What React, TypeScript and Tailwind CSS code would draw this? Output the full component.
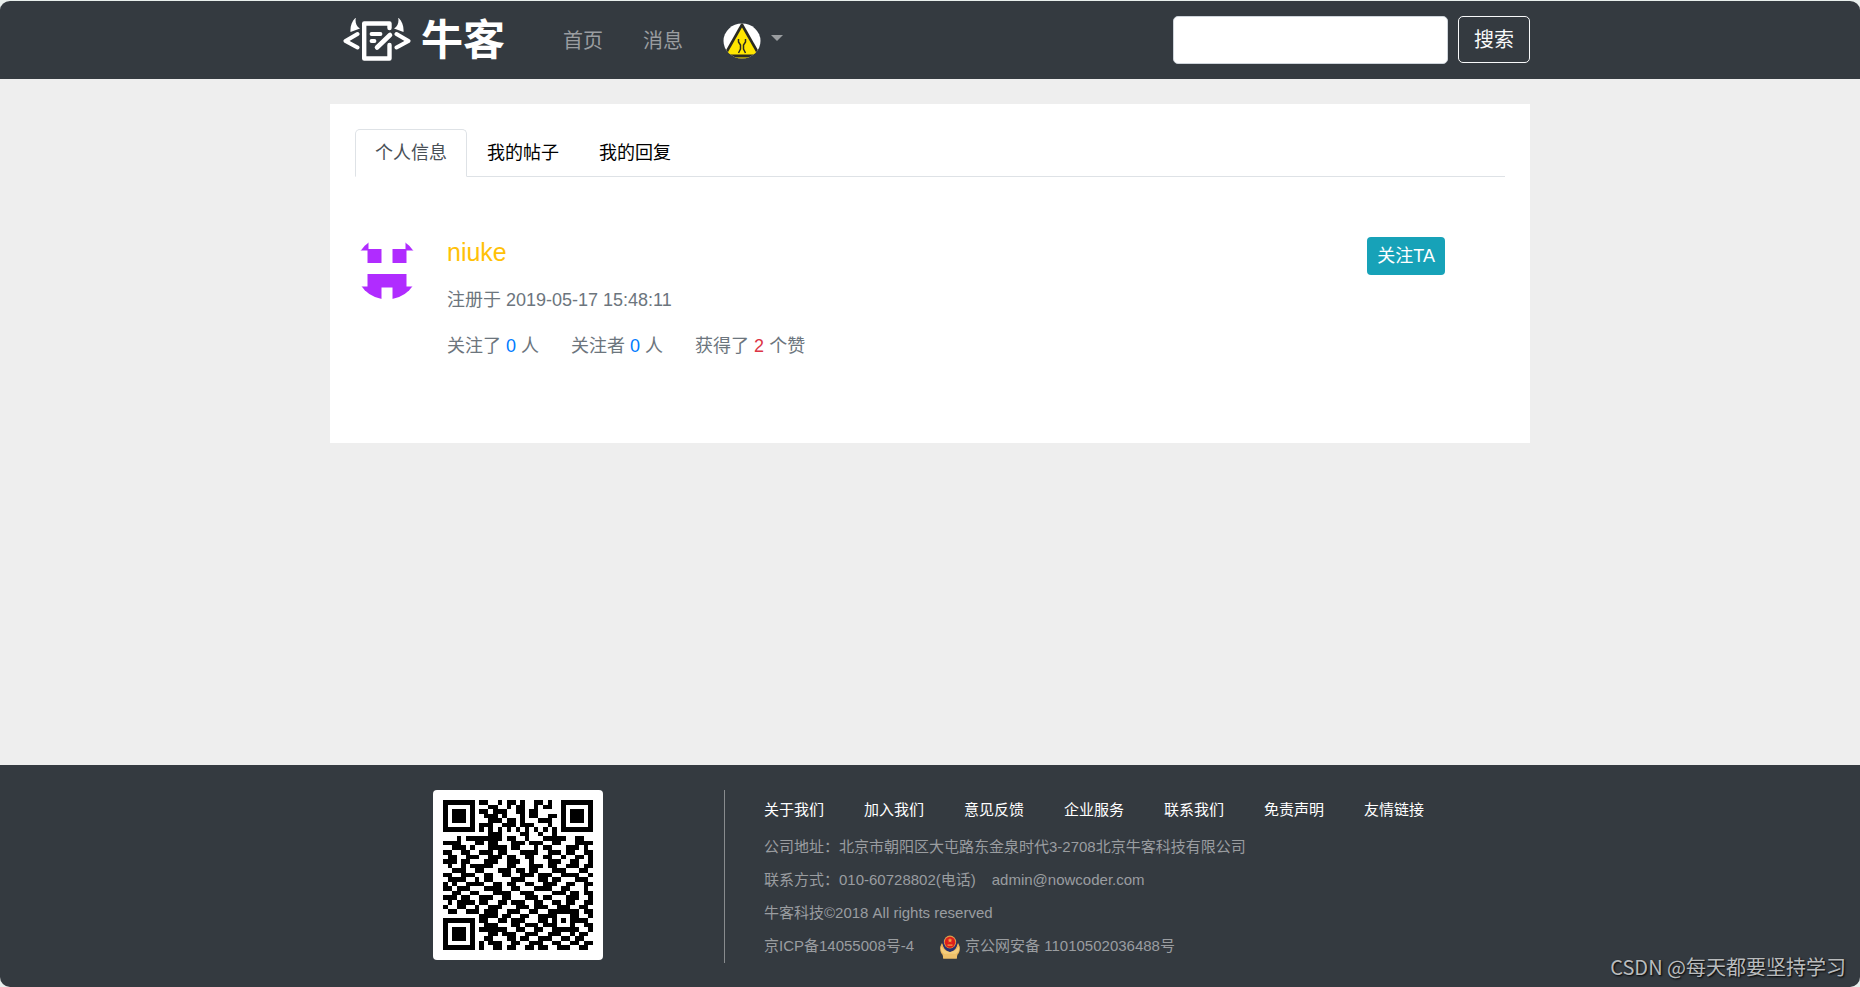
import React from "react";

const QR_ROWS = [
  "111111101100101101001101001111111",
  "100000100011001011001011001000001",
  "101110101101110011011000001011101",
  "101110100111010001011001101011101",
  "101110100011101101000111001011101",
  "100000101110011101110001001000001",
  "111111101010101010101010101111111",
  "000000000011100001100100100000000",
  "000101111111101100100011111001100",
  "111100011011000111011100110001111",
  "001110100011110110001011000111010",
  "110011001110110001111001110110011",
  "011001110011101100110011001001101",
  "111011000111001110010001110011001",
  "010010111110001100011101100111011",
  "001110011000111011011000111000110",
  "110011100110011001110111001111001",
  "011110010110000111000110110001110",
  "101001111001101100110011100110011",
  "110111000111100110001111001100010",
  "001100110001111001110000111011011",
  "111011001110011000111011000111001",
  "010111101100110111001100110110011",
  "100110010011100011101110011100110",
  "011001110111001110011001111111011",
  "000000001111011001100111100011001",
  "111111101100110111000110101011110",
  "100000100111000110111011100010011",
  "101110101111110011001100111111001",
  "101110100011011100111001110010110",
  "101110100110001101100111001101100",
  "100000101011100110011100110011011",
  "111111101001101100110110011100110",
];

const FOOTER_LINKS = ["关于我们", "加入我们", "意见反馈", "企业服务", "联系我们", "免责声明", "友情链接"];
const TABS = ["个人信息", "我的帖子", "我的回复"];

function LogoMark() {
  return (
    <svg className="h-11 w-[68px]" viewBox="0 0 68 44" fill="none" stroke="#fff" strokeLinecap="round" strokeLinejoin="round" aria-hidden="true">
      <path d="M14.500 16 2.500 23 14.500 29.500" strokeWidth="4" />
      <path d="M53.500 16 65.500 23 53.500 29.500" strokeWidth="4" />
      <path d="M46.500 10V5.500H21.200V40.500H46.500V27" strokeWidth="4.400" />
      <path d="M28.500 16H37.500M28.500 23H31.500" strokeWidth="3.800" />
      <path d="M34 29.500 47 17" strokeWidth="4.600" />
      <path d="M12.800-.5C9 3 7 8 7.500 14L17 10.500C13 8.500 12 4 12.800-.5Z" fill="#fff" stroke="none" />
      <path d="M55.200-.5C59 3 61 8 60.500 14L51 10.500C55 8.500 56 4 55.200-.5Z" fill="#fff" stroke="none" />
    </svg>
  );
}

function RoadSignAvatar() {
  return (
    <svg className="h-9 w-[38px]" viewBox="0 0 38 36" role="img" aria-label="头像">
      <clipPath id="sign-clip">
        <ellipse cx="19" cy="18" rx="18.500" ry="17.500" />
      </clipPath>
      <g clipPath="url(#sign-clip)">
        <rect width="38" height="36" fill="#fff" />
        <path d="M19-1 40 36H-2Z" fill="#2b2b22" />
        <path d="M19 4.500 33.500 30Q33.500 31.500 32 31.500H6Q4.500 31.500 4.500 30Z" fill="#ffe600" />
        <path d="M0 34.300H38V36H0Z" fill="#c8b400" />
        <path d="M15.500 16V19L17.500 22V26L15.500 30M22.500 16V19L20.500 22V26L22.500 30" stroke="#2b2b22" strokeWidth="1.500" fill="none" />
      </g>
    </svg>
  );
}

function ProfileAvatar() {
  return (
    <svg className="size-16 shrink-0" viewBox="0 0 64 64" role="img" aria-label="niuke">
      <clipPath id="profile-clip">
        <circle cx="32" cy="32" r="31.500" />
      </clipPath>
      <g clipPath="url(#profile-clip)" fill="#b02cff">
        <path d="M0 0H13.500V14.500H0ZM50.500 0H64V14.500H50.500Z" />
        <path d="M12.500 13H26.500V27H12.500ZM37.500 13H51.500V27H37.500Z" />
        <path d="M12.500 38H51.500V50.500H64V64H37.500V51.500H26.500V64H0V50.500H12.500Z" />
      </g>
    </svg>
  );
}

function QrCode() {
  return (
    <svg className="size-[150px]" viewBox="0 0 33 33" shapeRendering="crispEdges" role="img" aria-label="二维码">
      {QR_ROWS.map((row, y) =>
        row.split("").map((bit, x) => (bit === "1" ? <rect key={`${x}-${y}`} x={x} y={y} width="1" height="1" fill="#000" /> : null)),
      )}
    </svg>
  );
}

function PoliceEmblem() {
  return (
    <svg className="h-6 w-5" viewBox="0 0 20 24" aria-hidden="true">
      <path d="M2 8C-1 13 0 18 3 20V23.500H17V20C20 18 21 13 18 8L15 14H5Z" fill="#e9b45c" />
      <path d="M10 1C6 1 3 4 2.800 8 2.800 13 6 16 10 17.500 14 16 17.200 13 17.200 8 17 4 14 1 10 1Z" fill="#27306f" />
      <ellipse cx="10" cy="7" rx="6.200" ry="6.500" fill="#e09a45" />
      <ellipse cx="10" cy="7.300" rx="5.200" ry="5.600" fill="#dd1f1b" />
      <path d="m10 3 .7 1.500 1.600.2-1.200 1.100.3 1.600L10 6.600l-1.400.8.3-1.600-1.200-1.100 1.600-.2ZM7.500 9.500h5v1.200h-5Z" fill="#f4a340" />
      <path d="M.8 11C3 14.500 6 16.500 10 17 14 16.500 17 14.500 19.200 11 20 17 16 20.500 10 20.500 4 20.500 0 17 .8 11Z" fill="#f3cd7c" />
      <path d="M2.500 19.500Q10 17.500 17.500 19.500L16.500 23.500H3.500Z" fill="#eec06a" />
    </svg>
  );
}

function Header() {
  return (
    <header className="bg-[#343a40]">
      <div className="mx-auto flex h-[78px] w-full max-w-[1200px] items-center">
        <a href="#" className="ml-[13px] flex items-center gap-2.5 text-white">
          <LogoMark />
          <span className="pt-0.5 text-[42px] leading-[44px] font-semibold">牛客</span>
        </a>
        <nav className="ml-[58px] flex items-center gap-10 pt-0.5 text-xl text-[#9a9da0]">
          <a href="#">首页</a>
          <a href="#">消息</a>
          <button type="button" aria-label="用户菜单" className="flex items-center gap-2.5">
            <RoadSignAvatar />
            <span className="mb-1.5 border-x-6 border-t-6 border-x-transparent border-t-[#9a9da0]" />
          </button>
        </nav>
        <form className="ml-auto flex items-start gap-2.5 text-xl" onSubmit={(e) => e.preventDefault()}>
          <input type="search" aria-label="搜索" className="h-12 w-[275px] rounded-[5px] border border-[#ced4da] bg-white px-3 text-[#495057]" />
          <button type="submit" className="h-[47px] rounded-[5px] border border-[#f8f9fa] px-[15px] text-[#f8f9fa]">
            搜索
          </button>
        </form>
      </div>
    </header>
  );
}

function Profile() {
  return (
    <main className="mx-auto mt-[25px] mb-10 w-full max-w-[1200px] bg-white px-[25px] pt-[25px] pb-[83px]">
      <ul className="flex border-b border-[#dee2e6] text-lg">
        {TABS.map((tab, i) => (
          <li key={tab} className="-mb-px">
            <a
              href="#"
              className={
                i === 0
                  ? "flex h-12 items-center rounded-t-[5px] border border-[#dee2e6] border-b-white bg-white px-[19px] text-[#495057]"
                  : "flex h-12 items-center border border-transparent px-[19px] text-black"
              }
            >
              {tab}
            </a>
          </li>
        ))}
      </ul>
      <section className="mt-[59px] flex items-start gap-7 pr-[60px]">
        <ProfileAvatar />
        <div className="flex-1 text-lg leading-7 text-[#6c757d]">
          <h1 className="text-[25px] leading-8 text-[#ffc107]">niuke</h1>
          <p className="mt-[18px]">注册于 2019-05-17 15:48:11</p>
          <p className="mt-[18px] flex gap-8">
            <span>
              关注了 <a href="#" className="text-[#007bff]">0</a> 人
            </span>
            <span>
              关注者 <a href="#" className="text-[#007bff]">0</a> 人
            </span>
            <span>
              获得了 <span className="text-[#dc3545]">2</span> 个赞
            </span>
          </p>
        </div>
        <button type="button" className="mt-px h-[38px] rounded bg-[#17a2b8] px-2.5 text-lg text-white">
          关注TA
        </button>
      </section>
    </main>
  );
}

function Footer() {
  return (
    <footer className="relative mt-auto bg-[#343a40]">
      <div className="mx-auto flex w-full max-w-[1200px] items-start pt-[25px] pb-6">
        <div className="ml-[103px] shrink-0 rounded bg-white p-2.5">
          <QrCode />
        </div>
        <div className="ml-[121px] border-l border-[#888b8e] pl-[39px] text-[15px] text-[#9a9da0]">
          <ul className="flex h-[41px] items-center gap-10 text-white">
            {FOOTER_LINKS.map((link) => (
              <li key={link}>
                <a href="#">{link}</a>
              </li>
            ))}
          </ul>
          <p className="flex h-[33px] items-center">公司地址：北京市朝阳区大屯路东金泉时代3-2708北京牛客科技有限公司</p>
          <p className="flex h-[33px] items-center gap-4">
            <span>联系方式：010-60728802(电话)</span>
            <span>admin@nowcoder.com</span>
          </p>
          <p className="flex h-[33px] items-center">牛客科技©2018 All rights reserved</p>
          <p className="flex h-[33px] items-center">
            <span className="mr-[26px]">京ICP备14055008号-4</span>
            <PoliceEmblem />
            <span className="ml-[5px]">京公网安备 11010502036488号</span>
          </p>
        </div>
      </div>
      <p className="absolute right-3.5 bottom-1.5 font-['Noto_Sans_CJK_SC',sans-serif] text-xl leading-7 text-[#b9bbbd] [text-shadow:1px_1px_2px_#000]">
        CSDN @每天都要坚持学习
      </p>
    </footer>
  );
}

export default function App() {
  return (
    <div className="min-h-screen bg-[#e9efed] font-['Liberation_Sans','Noto_Sans_CJK_SC',sans-serif]">
      <div className="flex min-h-screen flex-col overflow-hidden rounded-[10px] border-t border-[#e9efed] bg-[#eeeeee]">
        <Header />
        <Profile />
        <Footer />
      </div>
    </div>
  );
}
